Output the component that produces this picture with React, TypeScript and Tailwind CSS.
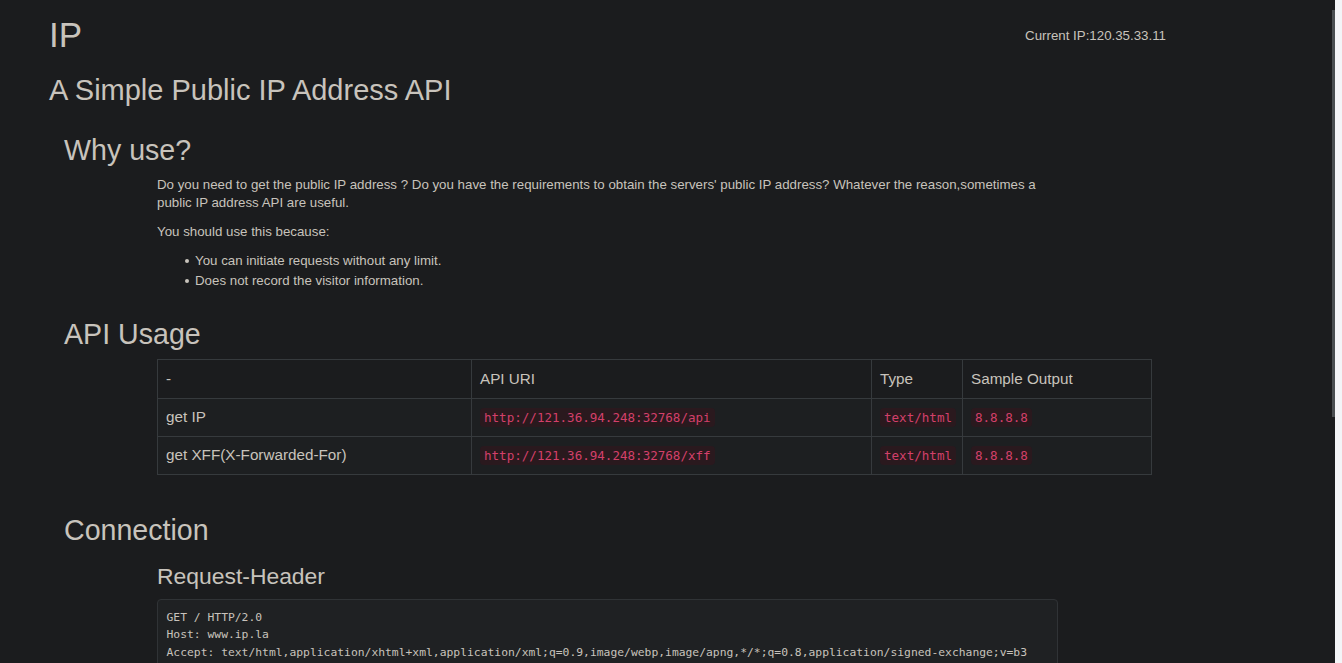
import React from "react";

const sans = { fontFamily: '"Liberation Sans", Arial, sans-serif' };

function Code({ children }: { children: React.ReactNode }) {
  return (
    <code className="rounded-[4px] bg-[#2a191e] px-[4px] py-[2px] font-['DejaVu_Sans_Mono',monospace] text-[12.55px] leading-[14px] text-[#d3406a]">
      {children}
    </code>
  );
}

export default function App() {
  const rows = [
    ["get IP", "http://121.36.94.248:32768/api", "text/html", "8.8.8.8"],
    ["get XFF(X-Forwarded-For)", "http://121.36.94.248:32768/xff", "text/html", "8.8.8.8"],
  ];
  return (
    <div
      className="flex h-[663px] w-full overflow-hidden bg-[#1b1c1e] text-[#c8c3bc]"
      style={sans}
    >
      <div className="flex min-w-0 flex-1">
        <div className="min-w-0 flex-1 pl-[49px]">
          {/* header */}
          <div className="flex w-[1117px] items-start justify-between pt-[14.5px]">
            <h1 className="text-[35px] leading-[40px] font-normal">IP</h1>
            <div className="mt-[13px] text-[13.3px] leading-[16px]">Current IP:120.35.33.11</div>
          </div>
          <h2 className="mt-[19px] text-[29px] leading-[32px] font-normal">
            A Simple Public IP Address API
          </h2>

          <div className="pl-[15px]">
            <h3 className="mt-[28px] text-[28.6px] leading-[32px] font-normal">Why use?</h3>
            <div className="ml-[93px] mt-[10px] w-[901px] text-[13.3px] leading-[18.57px]">
              <p className="mb-[10px]">
                Do you need to get the public IP address ? Do you have the requirements to obtain the
                servers' public IP address? Whatever the reason,sometimes a public IP address API are
                useful.
              </p>
              <p className="mb-[10px]">You should use this because:</p>
              <ul className="pl-[28px] leading-[20px]">
                <li className="flex items-center">
                  <span className="mr-[6px] h-[4px] w-[4px] shrink-0 rounded-full bg-[#c8c3bc]" />
                  You can initiate requests without any limit.
                </li>
                <li className="flex items-center">
                  <span className="mr-[6px] h-[4px] w-[4px] shrink-0 rounded-full bg-[#c8c3bc]" />
                  Does not record the visitor information.
                </li>
              </ul>
            </div>

            <h3 className="mt-[27px] text-[28.6px] leading-[32px] font-normal">API Usage</h3>
            <div className="ml-[93px] mt-[8.7px]">
              <table className="w-[994px] table-fixed border-collapse text-[15.25px] leading-[20px]">
                <colgroup>
                  <col className="w-[314px]" />
                  <col className="w-[400px]" />
                  <col className="w-[91px]" />
                  <col className="w-[189px]" />
                </colgroup>
                <thead>
                  <tr className="h-[39px] bg-[#1b1c1e]">
                    {["-", "API URI", "Type", "Sample Output"].map((h) => (
                      <th
                        key={h}
                        className="border border-[#363a3d] px-[8px] text-left align-middle font-normal"
                      >
                        {h}
                      </th>
                    ))}
                  </tr>
                </thead>
                <tbody>
                  {rows.map((r) => (
                    <tr key={r[0]} className="h-[38px] bg-[#1d1f21]">
                      <td className="border border-[#363a3d] px-[8px] align-middle">{r[0]}</td>
                      <td className="border border-[#363a3d] px-[8px] align-middle">
                        <Code>{r[1]}</Code>
                      </td>
                      <td className="border border-[#363a3d] px-[8px] align-middle">
                        <Code>{r[2]}</Code>
                      </td>
                      <td className="border border-[#363a3d] px-[8px] align-middle">
                        <Code>{r[3]}</Code>
                      </td>
                    </tr>
                  ))}
                </tbody>
              </table>
            </div>

            <h3 className="mt-[39px] text-[28.6px] leading-[32px] font-normal">Connection</h3>
            <div className="ml-[93px]">
              <h4 className="mt-[16.7px] text-[22.9px] leading-[26px] font-normal">Request-Header</h4>
              <pre className="mt-[10px] w-[901px] overflow-hidden rounded-[4px] border border-[#303336] bg-[#1f2123] px-[8.5px] py-[9.5px] font-['DejaVu_Sans_Mono',monospace] text-[11.35px] leading-[17.3px] text-[#c8c3bc]">
{`GET / HTTP/2.0
Host: www.ip.la
Accept: text/html,application/xhtml+xml,application/xml;q=0.9,image/webp,image/apng,*/*;q=0.8,application/signed-exchange;v=b3
User-Agent: Mozilla/5.0
Accept-Encoding: gzip, deflate, br`}
              </pre>
            </div>
          </div>
        </div>
        {/* scroll thumb */}
        <div className="w-[3px] shrink-0 pt-[10px]">
          <div className="h-[407px] w-[3px] bg-[#4a4e51]" />
        </div>
      </div>
      <div className="w-[7px] shrink-0 bg-[#f3f4f7]" />
    </div>
  );
}
